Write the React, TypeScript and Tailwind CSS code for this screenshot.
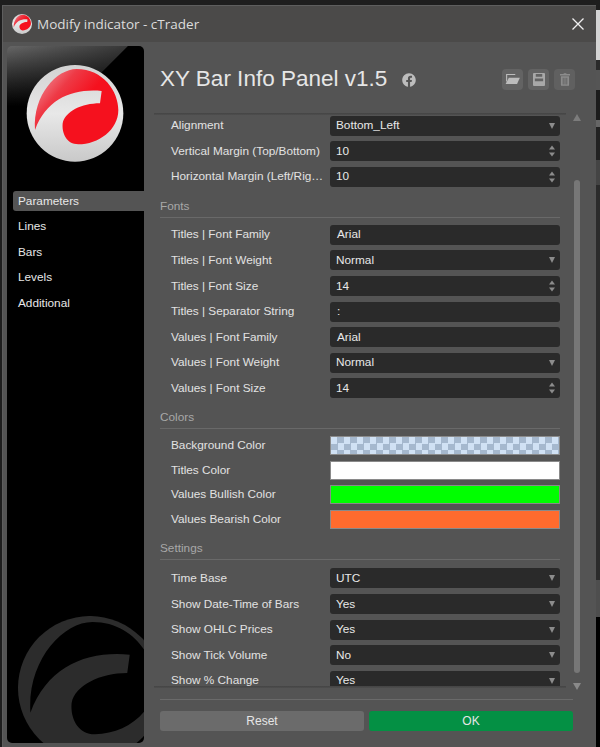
import { FaFacebook } from 'react-icons/fa'

const font = 'font-["Liberation_Sans",Arial,sans-serif]'

// same mark in every size, drawn in the 345 unit box of the zoomed logo
const MARK_PATH =
  'M45 225C38 120 110 42 170 42C250 42 295 110 295 165C295 225 235 268 175 268C140 268 125 235 128 205C135 170 185 145 240 145L245 108C160 100 80 130 45 225Z'

function RedLogo({ id, className, viewBox }: { id: string; className: string; viewBox: string }) {
  return (
    <svg viewBox={viewBox} className={className}>
      <defs>
        <linearGradient id={`${id}-disc`} x1="0" y1="0" x2="0" y2="1">
          <stop offset="0" stopColor="#d2d2d2" />
          <stop offset="0.5" stopColor="#e8e8e8" />
          <stop offset="1" stopColor="#c9c9c9" />
        </linearGradient>
        <linearGradient id={`${id}-red`} x1="0" y1="0.25" x2="0.45" y2="0.6">
          <stop offset="0" stopColor="#f0808a" />
          <stop offset="0.45" stopColor="#ee3a46" />
          <stop offset="1" stopColor="#f5111e" />
        </linearGradient>
      </defs>
      <circle cx="165" cy="175" r="145" fill={`url(#${id}-disc)`} />
      <path d={MARK_PATH} fill={`url(#${id}-red)`} />
    </svg>
  )
}

function Watermark() {
  return (
    <svg viewBox="0 0 137 127" className="mt-auto block h-[127px] w-[137px] shrink-0">
      <g transform="translate(83 72) scale(0.4966) translate(-165 -175)">
        <circle cx="165" cy="175" r="145" fill="#2c2c2c" />
        <path d={MARK_PATH} fill="#000" />
      </g>
    </svg>
  )
}

function SpinArrows() {
  return (
    <svg viewBox="0 0 6 12" className="h-3 w-[6px] shrink-0 fill-[#8c8c8c]">
      <path d="M3 0.5 6 4.5H0Z" />
      <path d="M0 7.5H6L3 11.5Z" />
    </svg>
  )
}

function DropArrow() {
  return (
    <svg viewBox="0 0 6 6" className="h-[6px] w-[6px] shrink-0 fill-[#8c8c8c]">
      <path d="M0 0H6L3 6Z" />
    </svg>
  )
}

type Row = { label: string; kind: 'select' | 'number' | 'text'; value: string }

function Control({ kind, value }: { kind: Row['kind']; value: string }) {
  return (
    <div
      className={`flex h-5 w-[230px] shrink-0 items-center justify-between rounded-[3px] bg-[#2a2a2a] pr-[5px] text-[11.8px] text-[#e8e8e8] ${
        kind === 'text' ? 'pl-[7px]' : 'pl-[6px]'
      }`}
    >
      <span className="pt-px">{value}</span>
      {kind === 'select' && <DropArrow />}
      {kind === 'number' && <SpinArrows />}
    </div>
  )
}

function FieldRow({ label, kind, value }: Row) {
  return (
    <div className="flex h-5 shrink-0 items-center">
      <div className="w-[170px] truncate pl-[11px] pr-[6px] pt-px text-[11.8px] text-[#e2e2e2]">{label}</div>
      <Control kind={kind} value={value} />
    </div>
  )
}

function SectionTitle({ title, mb }: { title: string; mb: string }) {
  return (
    <div className={`mt-[12px] border-b border-[#696969] pb-1 text-[11.8px] leading-[14px] text-[#a8a8a8] ${mb}`}>
      {title}
    </div>
  )
}

function ColorRow({ label, swatch }: { label: string; swatch: string }) {
  return (
    <div className="flex h-5 shrink-0 items-center">
      <div className="w-[170px] pl-[11px] pt-px text-[11.8px] text-[#e2e2e2]">{label}</div>
      <div className={`h-[19px] w-[230px] shrink-0 border border-[#8a8a8a] ${swatch}`} />
    </div>
  )
}

const topRows: Row[] = [
  { label: 'Alignment', kind: 'select', value: 'Bottom_Left' },
  { label: 'Vertical Margin (Top/Bottom)', kind: 'number', value: '10' },
  { label: 'Horizontal Margin (Left/Right)', kind: 'number', value: '10' },
]

const fontRows: Row[] = [
  { label: 'Titles | Font Family', kind: 'text', value: 'Arial' },
  { label: 'Titles | Font Weight', kind: 'select', value: 'Normal' },
  { label: 'Titles | Font Size', kind: 'number', value: '14' },
  { label: 'Titles | Separator String', kind: 'text', value: ':' },
  { label: 'Values | Font Family', kind: 'text', value: 'Arial' },
  { label: 'Values | Font Weight', kind: 'select', value: 'Normal' },
  { label: 'Values | Font Size', kind: 'number', value: '14' },
]

const settingRows: Row[] = [
  { label: 'Time Base', kind: 'select', value: 'UTC' },
  { label: 'Show Date-Time of Bars', kind: 'select', value: 'Yes' },
  { label: 'Show OHLC Prices', kind: 'select', value: 'Yes' },
  { label: 'Show Tick Volume', kind: 'select', value: 'No' },
  { label: 'Show % Change', kind: 'select', value: 'Yes' },
]

const navItems = ['Parameters', 'Lines', 'Bars', 'Levels', 'Additional']

export default function App() {
  return (
    <div className={`flex h-[747px] w-[600px] overflow-hidden bg-[#1e1e1e] pl-[2px] pt-[5px] ${font}`}>
      <div className="flex h-[742px] w-[594px] shrink-0 flex-col border-l border-t border-[#5e5e5e] bg-[#545454]">
        {/* Title bar */}
        <div className="flex h-[36px] shrink-0 items-center bg-[#4b4a49] pl-[9px] pr-[12px]">
          <RedLogo id="small" viewBox="20 30 290 290" className="h-5 w-5 shrink-0" />
          <div className='ml-[5px] font-["Open_Sans",sans-serif] text-[13.5px] text-[#dcdcdc]'>
            Modify indicator - cTrader
          </div>
          <svg viewBox="0 0 12 12" className="ml-auto h-3 w-3 stroke-[#f0f0f0] stroke-[1.3]">
            <path d="M0.5 0.5 11.5 11.5M11.5 0.5 0.5 11.5" />
          </svg>
        </div>

        <div className="flex min-h-0 flex-1 pl-1 pt-1">
          {/* Sidebar */}
          <div className="flex h-[697px] w-[137px] shrink-0 flex-col overflow-hidden rounded-[5px] bg-[linear-gradient(135deg,rgba(0,0,0,0)_0,rgba(0,0,0,0.45)_85px,#000_86px),linear-gradient(180deg,#666,#000_60px)]">
            <RedLogo id="big" viewBox="0 0 345 345" className="ml-[13px] mt-[9px] h-[115px] w-[115px] shrink-0" />
            <div className="ml-[6px] mt-[21px] flex flex-col gap-[5.6px]">
              {navItems.map((item, i) => (
                <div
                  key={item}
                  className={`flex h-5 items-center rounded-l-[3px] pl-[5px] pt-px text-[11.8px] text-[#e8e8e8] ${
                    i === 0 ? 'bg-[#545454]' : ''
                  }`}
                >
                  {item}
                </div>
              ))}
            </div>
            <Watermark />
          </div>

          {/* Main column */}
          <div className="flex min-w-0 flex-1 flex-col pl-4">
            <div className="flex h-[67px] shrink-0 items-center pr-[21px]">
              <div className="text-[22.5px] leading-none text-[#e6e6e6]">XY Bar Info Panel v1.5</div>
              <FaFacebook className="ml-[15px] h-[14px] w-[14px] text-[#bdbdbd]" />
              <div className="ml-auto flex gap-[5px]">
                <div className="flex h-[21px] w-[21px] items-center justify-center rounded-[4px] bg-[#636363]">
                  <svg viewBox="0 0 16 12" className="h-[11px] w-[15px] fill-[#bcbcbc]">
                    <path d="M1 0H11V1.2H2.2V7L1 9Z" />
                    <path d="M4 4H16L13 11H0.5Z" />
                  </svg>
                </div>
                <div className="flex h-[21px] w-[21px] items-center justify-center rounded-[4px] bg-[#636363]">
                  <svg viewBox="0 0 13 14" className="h-[13px] w-3 fill-[#a8a8a8]">
                    <path d="M1 0H12A1 1 0 0 1 13 1V13A1 1 0 0 1 12 14H1A1 1 0 0 1 0 13V1A1 1 0 0 1 1 0ZM3 1V4H10V1ZM2 6V9H11V6Z" fillRule="evenodd" />
                  </svg>
                </div>
                <div className="flex h-[21px] w-[21px] items-center justify-center rounded-[4px] bg-[#606060]">
                  <svg viewBox="0 0 11 14" className="h-[13px] w-[10px] fill-[#8c8c8c]">
                    <path d="M4 0H7V1H11V2.5H0V1H4ZM1 3.5H10V13A1 1 0 0 1 9 14H2A1 1 0 0 1 1 13ZM3 5V12.5H4V5ZM5 5V12.5H6V5ZM7 5V12.5H8V5Z" fillRule="evenodd" />
                  </svg>
                </div>
              </div>
            </div>

            <div className="flex h-[575px] shrink-0">
              <div className="flex w-[412px] flex-col">
                <div className="-ml-[6px] h-[2px] w-[412px] shrink-0 bg-[linear-gradient(180deg,#444,#4e4e4e)]" />
                <div className="flex min-h-0 flex-1 flex-col overflow-hidden pt-[0.6px]">
                  <div className="flex w-[400px] shrink-0 flex-col gap-[5.6px]">
                    {topRows.map((r) => (
                      <FieldRow key={r.label} {...r} />
                    ))}
                  </div>
                  <div className="w-[400px]">
                    <SectionTitle title="Fonts" mb="mb-[7px]" />
                    <div className="flex flex-col gap-[5.6px]">
                      {fontRows.map((r) => (
                        <FieldRow key={r.label} {...r} />
                      ))}
                    </div>
                    <SectionTitle title="Colors" mb="mb-[6px]" />
                    <div className="flex flex-col gap-[4.7px]">
                      <ColorRow
                        label="Background Color"
                        swatch="bg-[conic-gradient(#a5b8ce_25%,#d0e1f4_0_50%,#a5b8ce_0_75%,#d0e1f4_0)] bg-[length:13px_13px]"
                      />
                      <ColorRow label="Titles Color" swatch="bg-white" />
                      <ColorRow label="Values Bullish Color" swatch="bg-[#00ff00]" />
                      <ColorRow label="Values Bearish Color" swatch="bg-[#ff6b2e]" />
                    </div>
                    <SectionTitle title="Settings" mb="mb-2" />
                    <div className="flex flex-col gap-[5.6px]">
                      {settingRows.map((r) => (
                        <FieldRow key={r.label} {...r} />
                      ))}
                    </div>
                  </div>
                </div>
                <div className="-ml-[6px] h-[2px] w-[412px] shrink-0 bg-[linear-gradient(180deg,#444,#4e4e4e)]" />
              </div>
              {/* Scrollbar */}
              <div className="flex w-[10px] shrink-0 flex-col items-center">
                <svg viewBox="0 0 8 7" className="mt-[1px] h-[7px] w-2 shrink-0 fill-[#7c7c7c]">
                  <path d="M4 0 8 7H0Z" />
                </svg>
                <div className="mt-[59px] h-[493px] w-[6px] shrink-0 rounded-[3px] bg-[#777]" />
                <svg viewBox="0 0 8 7" className="mt-[10px] h-[7px] w-2 shrink-0 fill-[#8a8a8a]">
                  <path d="M0 0H8L4 7Z" />
                </svg>
              </div>
            </div>

            <div className="mt-[11px] h-px w-[413px] shrink-0 bg-[#6a6a6a]" />
            <div className="mt-[11px] flex w-[413px] shrink-0 gap-[5px]">
              <div className="flex h-5 flex-1 items-center justify-center rounded-[3px] bg-[#6b6b6b] text-[12px] text-[#e6e6e6]">
                Reset
              </div>
              <div className="flex h-5 flex-1 items-center justify-center rounded-[3px] bg-[#049044] text-[12px] text-[#e6e6e6]">
                OK
              </div>
            </div>
          </div>
        </div>
      </div>

      {/* Bits of the app behind the dialog */}
      <div className="-mt-[5px] flex w-[4px] shrink-0 flex-col">
        <div className="h-[10px] bg-[#1e1e1e]" />
        <div className="h-[50px] bg-[#d4d4d4]" />
        <div className="h-[10px] bg-[#2a2a2a]" />
        <div className="h-[20px] bg-[#555]" />
        <div className="h-[30px] bg-[#1c1c1c]" />
        <div className="h-[7px] bg-[#666]" />
        <div className="h-[33px] bg-[#222]" />
        <div className="h-[25px] bg-[#444]" />
        <div className="h-[395px] bg-[#2b2b2b]" />
        <div className="h-[37px] bg-[#4e4e4e]" />
        <div className="flex-1 bg-black" />
      </div>
    </div>
  )
}
